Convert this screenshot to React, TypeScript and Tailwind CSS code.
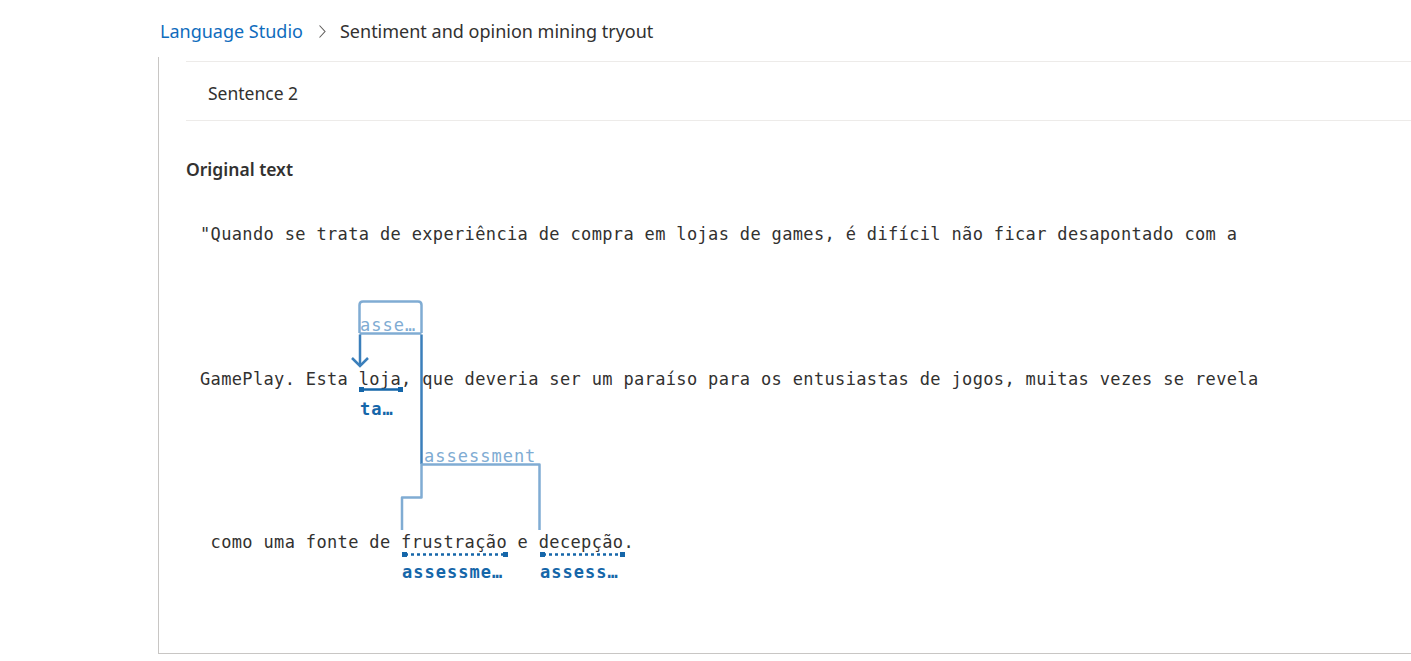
import React from "react";

const mono = "font-['DejaVu_Sans_Mono',monospace]";

export default function App() {
  return (
    <div className="w-[1411px] h-[661px] overflow-hidden bg-white font-['Noto_Sans','Open_Sans',sans-serif] text-[#323130]">
      {/* Breadcrumb */}
      <div className="h-[57px] pl-[160px] pt-[19px] flex items-start leading-[24px]">
        <span className="text-[18px] text-[#0f6cbd]">Language Studio</span>
        <svg width="10" height="24" viewBox="0 0 10 24" className="ml-[14px] mr-[13px]">
          <path d="M2.5 6.5 L8 12.5 L2.5 18.5" fill="none" stroke="#605e5c" strokeWidth="1.1" />
        </svg>
        <span className="text-[18px] text-[#323130]">Sentiment and opinion mining tryout</span>
      </div>

      {/* Panel */}
      <div className="ml-[158px] h-[597px] border-l border-b border-[#c8c6c4] pl-[27px] pt-[4px]">
        <div className="h-[60px] border-t border-b border-[#edebe9] pl-[22px] pt-[20px]">
          <div className="text-[17.5px] leading-[22px] text-[#323130]">Sentence 2</div>
        </div>
        <div className="mt-[36px] text-[17.5px] leading-[24px] font-semibold text-[#323130]">Original text</div>

        {/* Diagram */}
        <div className={`relative mt-[19px] h-[420px] ${mono} text-[17px] tracking-[0.35px] leading-[24px] text-[#323130]`}>
          <div className="pl-[14px] pt-[22px] whitespace-pre">"Quando se trata de experiência de compra em lojas de games, é difícil não ficar desapontado com a</div>
          <div className="pl-[14px] mt-[121px] whitespace-pre">GamePlay. Esta loja, que deveria ser um paraíso para os entusiastas de jogos, muitas vezes se revela</div>
          <div className="pl-[14px] mt-[139px] whitespace-pre"> como uma fonte de frustração e decepção.</div>

          <svg className="absolute left-0 top-0" width="700" height="420" viewBox="0 0 700 420">
            <g transform="translate(-186 -200)" fill="none" strokeLinejoin="round">
              {/* light box above asse… */}
              <path d="M359.5 333 V305 Q359.5 301.5 363 301.5 H418 Q421.5 301.5 421.5 305 V333" stroke="#80acd3" strokeWidth="2.5" />
              <path d="M359.5 333.5 H421.5" stroke="#80acd3" strokeWidth="2.5" />
              {/* medium verticals */}
              <path d="M360 334.5 V366" stroke="#3b7fbb" strokeWidth="2.5" />
              <path d="M352 358 L360 366 L368 358" stroke="#3b7fbb" strokeWidth="2.5" strokeLinejoin="miter" />
              <path d="M421.5 334.5 V464" stroke="#3b7fbb" strokeWidth="2.5" />
              {/* light connector to frustração and decepção */}
              <path d="M402 530 V497.5 H421.5 V464.5 H539.5 V530" stroke="#80acd3" strokeWidth="2.5" />
              {/* solid target bar under loja */}
              <path d="M361 389.5 H401" stroke="#1566a9" strokeWidth="2.5" />
              <rect x="359" y="387" width="5" height="5" fill="#1566a9" />
              <rect x="398" y="387" width="5" height="5" fill="#1566a9" />
              {/* dotted assessment bars */}
              <path d="M405 554.5 H505" stroke="#1566a9" strokeWidth="2.5" strokeDasharray="3 3" />
              <rect x="402" y="552" width="5" height="5" fill="#1566a9" />
              <rect x="503" y="552" width="5" height="5" fill="#1566a9" />
              <path d="M543 554.5 H622" stroke="#1566a9" strokeWidth="2.5" strokeDasharray="3 3" />
              <rect x="540" y="552" width="5" height="5" fill="#1566a9" />
              <rect x="620" y="552" width="5" height="5" fill="#1566a9" />
            </g>
          </svg>

          <div className="absolute left-[174px] top-[115px] text-[17px] tracking-[1px] leading-[20px] text-[#80acd3]">asse…</div>
          <div className="absolute left-[238px] top-[246px] text-[17px] tracking-[1px] leading-[20px] text-[#80acd3]">assessment</div>
          <div className="absolute left-[174px] top-[199px] text-[17px] tracking-[1px] leading-[20px] font-bold text-[#1566a9]">ta…</div>
          <div className="absolute left-[216px] top-[362px] text-[17px] tracking-[1px] leading-[20px] font-bold text-[#1566a9]">assessme…</div>
          <div className="absolute left-[354px] top-[362px] text-[17px] tracking-[1px] leading-[20px] font-bold text-[#1566a9]">assess…</div>
        </div>
      </div>
    </div>
  );
}
